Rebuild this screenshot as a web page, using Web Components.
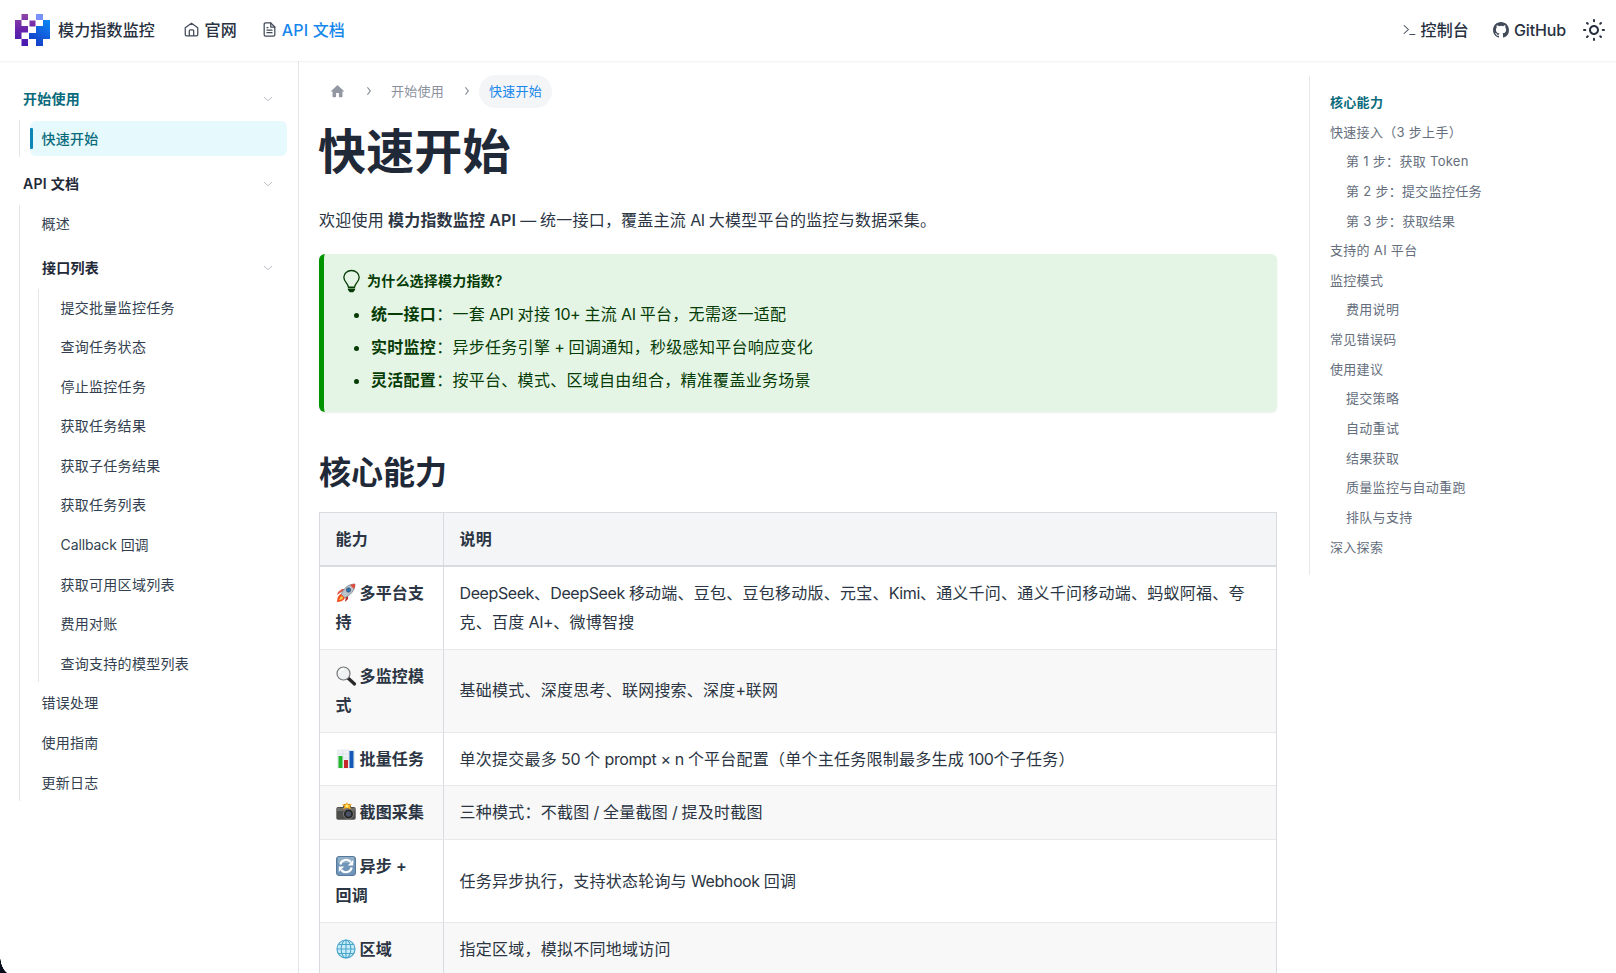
<!DOCTYPE html>
<html lang="zh-CN">
<head>
<meta charset="utf-8">
<title>快速开始 | 模力指数监控</title>
<style>
html{font-size:16px}
body{margin:0;height:973px;overflow:hidden;background:#fff;color:#1f2937;font-family:Inter,"Noto Sans CJK SC",sans-serif;font-size:16px;line-height:1.8;letter-spacing:.16px}
</style>
</head>
<body>
<docs-app></docs-app>
<script>
const define = (name, html, init) => {
  const t = document.createElement('template');
  t.innerHTML = html;
  customElements.define(name, class extends HTMLElement {
    constructor() {
      super();
      this.attachShadow({ mode: 'open' }).append(t.content.cloneNode(true));
    }
    connectedCallback() { if (init) init(this, this.shadowRoot); }
  });
};

// Latin runs inside Chinese prose get tighter tracking than the ideographs.
const tightenLatin = root => {
  const walker = document.createTreeWalker(root, NodeFilter.SHOW_TEXT);
  const nodes = [];
  while (walker.nextNode()) nodes.push(walker.currentNode);
  for (const node of nodes) {
    if (!node.data.trim() || node.parentElement.closest('style,b,[slot=k],[slot=title]')) continue;
    const parts = node.data.split(/([\x20-\x7e—×]+)/).filter(Boolean);
    if (parts.length < 2) continue;
    node.replaceWith(...parts.map(part => {
      if (!/^[\x20-\x7e—×]+$/.test(part)) return part;
      const span = document.createElement('span');
      span.className = 'latin';
      span.style.letterSpacing = '-.4px';
      span.textContent = part;
      return span;
    }));
  }
};

const stroke = 'fill="none" stroke="currentColor" stroke-linecap="round" stroke-linejoin="round"';
const ICONS = {
  home: [24, `<g ${stroke} stroke-width="2"><path d="M2 9.2 12 2l10 7.200V20a2 2 0 0 1-2 2H4a2 2 0 0 1-2-2z"/><path d="M8.500 21.500v-7.500a1.500 1.500 0 0 1 1.500-1.500h4a1.500 1.500 0 0 1 1.500 1.500v7.500"/></g>`],
  doc: [24, `<g ${stroke} stroke-width="2"><path d="M14 1.500H5.500a2 2 0 0 0-2 2v17a2 2 0 0 0 2 2h13a2 2 0 0 0 2-2V8z"/><path d="M14 1.500V8h6.500M8 9h1.500M8 13h8M8 17h8"/></g>`],
  terminal: [24, `<g ${stroke} stroke-width="2"><path d="m2 3 8 8-8 8M12.500 21H22"/></g>`],
  github: [16, `<path fill="currentColor" d="M8 0C3.580 0 0 3.580 0 8c0 3.540 2.290 6.530 5.470 7.590.4.070.55-.17.55-.38 0-.19-.01-.82-.01-1.490-2.010.37-2.530-.49-2.690-.94-.09-.23-.48-.94-.82-1.130-.28-.15-.68-.52-.01-.53.63-.01 1.080.58 1.230.82.72 1.210 1.870.87 2.330.66.070-.52.28-.87.51-1.070-1.780-.2-3.640-.89-3.640-3.950 0-.87.31-1.590.82-2.150-.08-.2-.36-1.020.08-2.120 0 0 .67-.21 2.200.82a7.600 7.600 0 0 1 4 0c1.530-1.040 2.200-.82 2.200-.82.44 1.100.16 1.920.08 2.120.51.56.82 1.270.82 2.150 0 3.070-1.870 3.750-3.650 3.950.29.25.54.73.54 1.480 0 1.070-.01 1.930-.01 2.200 0 .21.15.46.55.38A8.010 8.010 0 0 0 16 8c0-4.420-3.580-8-8-8z"/>`],
  sun: [24, `<path fill="currentColor" d="M12,9c1.650,0,3,1.350,3,3s-1.350,3-3,3s-3-1.350-3-3S10.350,9,12,9 M12,7c-2.760,0-5,2.240-5,5s2.240,5,5,5s5-2.240,5-5 S14.760,7,12,7z"/><path ${stroke} stroke-width="2" d="M2 12h1.300M20.700 12H22M12 2v1.300M12 20.700V22M5 5l.8.8M18.200 18.200l.8.8M19 5l-.8.8M5 19l.8-.8"/>`],
  house: [24, `<path fill="currentColor" d="M10 19v-5h4v5c0 .55.45 1 1 1h3c.55 0 1-.45 1-1v-7h1.700c.46 0 .68-.57.33-.87L12.670 3.600c-.38-.34-.96-.34-1.340 0l-8.360 7.530c-.34.3-.13.87.33.87H5v7c0 .55.45 1 1 1h3c.55 0 1-.45 1-1z"/>`],
  down: [24, `<path ${stroke} stroke-width="1.800" d="m3 8 9 8 9-8"/>`],
  right: [24, `<path ${stroke} stroke-width="3" d="m8 4 8 8-8 8"/>`],
  bulb: [24, `<g ${stroke} stroke-width="1.400"><path d="M8.800 18c0-4-4.800-5.500-4.800-10.500a8 7 0 0 1 16 0C20 12.500 15.200 14 15.200 18z"/></g><path fill="currentColor" d="M8.200 19.200h7.600v1.500l-2 2.500h-3.600l-2-2.500z"/>`],
  rocket: [20, `<path d="M4 10 1 12l1-3 4-3h4z" fill="#e2574c"/><path d="M12 12v4l-3 3 1-5z" fill="#b3261e"/><path d="M5 12C7 6 12 1 19 1c0 7-5 11-10 14z" fill="#b9c3cc" stroke="#66727c" stroke-width=".7"/><path d="M14 2c2-1 4-1 5-1 0 2 0 3-1 5z" fill="#df4a3c"/><circle cx="12.500" cy="7" r="2.200" fill="#2b71b5" stroke="#48545e" stroke-width=".7"/><path d="M5 11c-3 1-4 5-4 8 3 0 6-1 8-4z" fill="#f4511e"/><path d="M6 13c-2 1-2 3-3 4 2 0 3-1 4-2z" fill="#ffd54f"/>`],
  search: [20, `<path d="m12 12 6.500 6" stroke="#282828" stroke-width="3.200" stroke-linecap="round"/><circle cx="7.500" cy="7.500" r="6.500" fill="#eef2f3" stroke="#777" stroke-width="1.200"/><path d="M4 7a4 4 0 0 1 4-4" fill="none" stroke="#fff" stroke-width="1.300"/>`],
  chart: [20, `<path fill="#eef2f5" stroke="#d7dfe4" stroke-width=".5" d="M1.500 1h17v18h-17z"/><path stroke="#cfdae0" stroke-width=".5" d="M2 5h16M2 9h16M2 13h16M7 1v18M13 1v18"/><path fill="#20b52b" d="M2.500 7h4v12h-4z"/><path fill="#c8272c" d="M8 11h4v8H8z"/><path fill="#1559b7" d="M13.500 2h4v17h-4z"/>`],
  camera: [20, `<rect x=".3" y="5" width="19.400" height="12.800" rx="1.800" fill="#4d4d4b"/><path fill="#706e68" d="M1 6h18v3H1z"/><path fill="#383838" d="m7 5 1-3h6l1 3z"/><circle cx="12.500" cy="12" r="5" fill="#252525" stroke="#8b8b88" stroke-width=".8"/><circle cx="12.500" cy="12" r="2.700" fill="#4b5267"/><path fill="#ffae20" d="m11 0 1.500 2.500L16 2l-2 2.500L15 7l-4-1-4 1 1.500-2.500L6 2l3.500.5z"/><circle cx="11" cy="4" r="1.500" fill="#fff07a"/>`],
  cycle: [20, `<rect x=".5" y=".5" width="19" height="19" rx="2.500" fill="#6f95b8" stroke="#56789a"/><path fill="#92afc9" d="M2 1h16v6H2z"/><g fill="none" stroke="#fff" stroke-width="2.200"><path d="M4.300 8.500a6 6 0 0 1 10.500-2.500M15.700 11.500a6 6 0 0 1-10.500 2.500"/></g><path fill="#fff" d="M17.200 4v5.500h-5.500zM2.800 16v-5.500h5.500z"/>`],
  globe: [20, `<circle cx="10" cy="10" r="9" fill="#c9ecfa" stroke="#4ba6cb" stroke-width="1.200"/><g fill="none" stroke="#4ba6cb" stroke-width="1.100"><ellipse cx="10" cy="10" rx="4.800" ry="9"/><path d="M10 1v18M1 10h18M2.500 5.500h15M2.500 14.500h15"/></g>`]
};
define('ui-icon', `<style>:host{display:inline-flex;flex:none;width:16px;height:16px}svg{width:100%;height:100%;display:block;overflow:visible}</style><svg aria-hidden="true" preserveAspectRatio="none"></svg>`, (el, root) => {
  const [box, body] = ICONS[el.getAttribute('name')];
  const svg = root.querySelector('svg');
  svg.setAttribute('viewBox', `0 0 ${box} ${box}`);
  svg.innerHTML = body;
});

define('brand-logo', `<style>:host{display:block;width:35px;height:32px}svg{display:block}</style>
<svg width="35" height="32" viewBox="0 0 35 32"><defs>
<linearGradient id="p" gradientUnits="userSpaceOnUse" x1="8" y1="0" x2="8" y2="32"><stop stop-color="#9146a5"/><stop offset=".5" stop-color="#6623ab"/><stop offset="1" stop-color="#4319b0"/></linearGradient>
<linearGradient id="b" gradientUnits="userSpaceOnUse" x1="34" y1="7" x2="17" y2="30"><stop stop-color="#0c85f4"/><stop offset="1" stop-color="#173ac5"/></linearGradient></defs>
<path fill="url(#p)" d="M6.500 0H13v6H6.500zM0 6h6.500v6H13v6.500H6.500V25H0zM14.500 6.500h6v6h-6zM6.500 25H13v7H6.500z"/>
<path fill="#7991fb" d="M21 0h7v6h-7z"/><path fill="url(#b)" d="M28 6h7v19h-7v7h-7v-7h-7v-6h7v-7h7z"/></svg>`);

define('nav-link', `<style>:host{display:flex;align-items:center;gap:5px;font-weight:500;line-height:24px;white-space:nowrap}:host([active]){color:#1687ec}</style><slot name="icon"></slot><slot></slot>`);

define('top-bar', `<style>:host{display:flex;align-items:center;box-sizing:border-box;height:61px;padding:0 10px 2px 15px;box-shadow:0 1px 2px rgba(0,0,0,.06);background:#fff;position:relative;color:#27313f}
b{font-weight:500;margin:0 29.500px 0 8px;line-height:24px}.l{display:flex;gap:25px}.r{display:flex;align-items:center;margin-left:auto;gap:24px}ui-icon{width:15px;height:15px;color:#414b5a}.t{width:13px;height:12px}.g{width:16px;height:16px}.s{width:24px;height:24px;margin-left:-8px;color:#27313f}.gh{letter-spacing:-.15px}</style>
<brand-logo></brand-logo><b>模力指数监控</b>
<div class="l"><nav-link><ui-icon slot="icon" name="home"></ui-icon>官网</nav-link><nav-link active><ui-icon slot="icon" name="doc"></ui-icon>API 文档</nav-link></div>
<div class="r"><nav-link><ui-icon slot="icon" class="t" name="terminal"></ui-icon>控制台</nav-link><nav-link class="gh"><ui-icon slot="icon" class="g" name="github"></ui-icon>GitHub</nav-link><ui-icon class="s" name="sun"></ui-icon></div>`);

define('side-item', `<style>:host{display:flex;align-items:center;box-sizing:border-box;height:35.200px;padding-left:11.500px;font-size:14px;letter-spacing:.28px;line-height:20px;color:#333f50;border-radius:6px}
:host([active]){background:#e6f9fc;color:#0a6b7c;font-weight:500}i{width:3px;height:21px;border-radius:1px;background:#0b86b5;margin:0 8.500px 0 -11.500px;display:none}:host([active]) i{display:block}</style><i></i><slot></slot>`);

define('side-group', `<style>:host{display:block}.h{display:flex;align-items:center;justify-content:space-between;height:35.200px;padding:0 14px 0 12px;font-size:14px;letter-spacing:.28px;line-height:20px;font-weight:600;color:#1f2937}
:host([current]) .h{color:#0a6b7c}.h ui-icon{width:10px;height:10px;color:#a3a8b0}
.c{display:flex;flex-direction:column;gap:4.400px;margin:3.500px 0 0 8px;padding:1px 0 1px 10px;border-left:1px solid #e4e6e9}</style>
<div class="h"><span></span><ui-icon name="down"></ui-icon></div><div class="c"><slot></slot></div>`, (el, root) => { root.querySelector('span').textContent = el.getAttribute('label'); });

define('docs-sidebar', `<style>:host{display:flex;flex-direction:column;gap:9.200px;box-sizing:border-box;border-right:1px solid #e3e5e8;padding:20.400px 11px 0 11px}side-group side-group{margin:4.600px 0 -1px}</style>
<side-group label="开始使用" current><side-item active>快速开始</side-item></side-group>
<side-group label="API 文档"><side-item>概述</side-item>
<side-group label="接口列表"><side-item>提交批量监控任务</side-item><side-item>查询任务状态</side-item><side-item>停止监控任务</side-item><side-item>获取任务结果</side-item><side-item>获取子任务结果</side-item><side-item>获取任务列表</side-item><side-item style="letter-spacing:-.1px">Callback 回调</side-item><side-item>获取可用区域列表</side-item><side-item>费用对账</side-item><side-item>查询支持的模型列表</side-item></side-group>
<side-item>错误处理</side-item><side-item>使用指南</side-item><side-item>更新日志</side-item></side-group>`);

define('crumb-trail', `<style>:host{display:flex;align-items:center;height:33px;font-size:13px;letter-spacing:.26px;line-height:20px;color:#8b919c}.home{width:17px;height:17px;margin:0 0 0 10px;color:#9297a3}.s{width:8px;height:10px;margin-left:19px;color:#868c97}.m{margin-left:18px}.p{margin-left:8px;padding:6.500px 10px;border-radius:17px;background:#f4f5f6;color:#1687ec}</style>
<ui-icon class="home" name="house"></ui-icon><ui-icon class="s" name="right"></ui-icon><span class="m">开始使用</span><ui-icon class="s" name="right"></ui-icon><span class="p">快速开始</span>`);

define('tip-box', `<style>:host{display:block;box-sizing:border-box;height:158px;border-left:5px solid #009400;border-radius:6px;background:#e5f5e5;padding:15.500px 16px;color:#053c05;box-shadow:0 1px 2px rgba(0,0,0,.08);letter-spacing:.29px}
.t{display:flex;align-items:center;gap:4px;height:24px;font-size:14px;letter-spacing:.2px;font-weight:600;line-height:24px}.t ui-icon{width:23px;height:23px}::slotted(ul){margin:7px 0 0!important;padding-left:31px!important}</style><div class="t"><ui-icon name="bulb"></ui-icon><slot name="title"></slot></div><slot></slot>`);

define('ability-row', `<style>:host{display:grid;grid-template-columns:124px 1fr;background:#fff;border-bottom:1px solid #e7e8ea}:host([alt]){background:#f8f8f8}:host([head]){background:#f3f5f7;border-bottom:2px solid #d8dbe0;font-weight:600}
div{display:flex;align-items:center;box-sizing:border-box;padding:12px 15.500px;color:#2b3543;letter-spacing:.24px}.a{border-right:1px solid #d8dbe0;font-weight:600;white-space:nowrap;letter-spacing:.16px}:host([head]) div{padding-block:11.700px}ui-icon{width:20px;height:20px;vertical-align:-4px;margin-right:4px}</style>
<div class="a"><span><slot name="k"></slot></span></div><div><span><slot></slot></span></div>`, (el, root) => {
  const n = el.getAttribute('icon');
  if (n) { const i = document.createElement('ui-icon'); i.setAttribute('name', n); root.querySelector('.a span').prepend(i); }
});

define('doc-article', `<style>:host{display:block;padding:13.500px 0 0 20px;width:958px}
h1{font-size:48px;line-height:60px;font-weight:700;margin:14.500px 0 0 -1px;letter-spacing:.16px}p{margin:24px 0 0;line-height:28.800px;height:28.800px;color:#2b3543;letter-spacing:.24px}p b{letter-spacing:.16px}b{font-weight:600}tip-box{margin-top:19px}
h2{font-size:32px;line-height:40px;font-weight:600;margin:41px 0 19.500px;letter-spacing:0}ul li{line-height:28.800px;margin-bottom:4.200px}.tb{border:1px solid #d8dbe0;border-bottom:0}</style>
<crumb-trail></crumb-trail><h1>快速开始</h1>
<p>欢迎使用 <b>模力指数监控 API</b> — 统一接口，覆盖主流 AI 大模型平台的监控与数据采集。</p>
<tip-box><span slot="title">为什么选择模力指数?</span><ul><li><b>统一接口</b>：一套 API 对接 10+ 主流 AI 平台，无需逐一适配</li><li><b>实时监控</b>：异步任务引擎 + 回调通知，秒级感知平台响应变化</li><li><b>灵活配置</b>：按平台、模式、区域自由组合，精准覆盖业务场景</li></ul></tip-box>
<h2>核心能力</h2>
<div class="tb"><ability-row head><span slot="k">能力</span>说明</ability-row>
<ability-row icon="rocket"><span slot="k">多平台支<br>持</span>DeepSeek、DeepSeek 移动端、豆包、豆包移动版、元宝、Kimi、通义千问、通义千问移动端、蚂蚁阿福、夸<br>克、百度 AI+、微博智搜</ability-row>
<ability-row icon="search" alt><span slot="k">多监控模<br>式</span>基础模式、深度思考、联网搜索、深度+联网</ability-row>
<ability-row icon="chart"><span slot="k">批量任务</span>单次提交最多 50 个 prompt × n 个平台配置（单个主任务限制最多生成 100个子任务）</ability-row>
<ability-row icon="camera" alt><span slot="k">截图采集</span>三种模式：不截图 / 全量截图 / 提及时截图</ability-row>
<ability-row icon="cycle"><span slot="k">异步 +<br>回调</span>任务异步执行，支持状态轮询与 Webhook 回调</ability-row>
<ability-row icon="globe" alt><span slot="k">区域</span>指定区域，模拟不同地域访问</ability-row></div>`, (el, root) => tightenLatin(root));

define('toc-link', `<style>:host{display:block;height:29.650px;line-height:29.650px;font-size:13px;letter-spacing:.3px;color:#656e7c;white-space:nowrap}:host([sub]){padding-left:16px}:host([active]){color:#0a6b7c;font-weight:600}</style><slot></slot>`);
define('page-toc', `<style>:host{display:block;box-sizing:border-box;height:499px;margin:15px 0 0 32px;padding:12px 0 0 20px;border-left:1px solid #e6e8ea}</style>
<toc-link active>核心能力</toc-link><toc-link>快速接入（3 步上手）</toc-link><toc-link sub>第 1 步：获取 Token</toc-link><toc-link sub>第 2 步：提交监控任务</toc-link><toc-link sub>第 3 步：获取结果</toc-link><toc-link>支持的 AI 平台</toc-link><toc-link>监控模式</toc-link><toc-link sub>费用说明</toc-link><toc-link>常见错误码</toc-link><toc-link>使用建议</toc-link><toc-link sub>提交策略</toc-link><toc-link sub>自动重试</toc-link><toc-link sub>结果获取</toc-link><toc-link sub>质量监控与自动重跑</toc-link><toc-link sub>排队与支持</toc-link><toc-link>深入探索</toc-link>`);

define('docs-app', `<style>:host{display:flex;flex-direction:column;height:973px;overflow:hidden;position:relative}main{display:grid;grid-template-columns:299px 978px 1fr;flex:1;min-height:0}.corner{position:absolute;left:0;bottom:0;width:9px;height:14px;background:radial-gradient(ellipse 12px 19px at 12px -3px,transparent 96%,#080e1c 100%)}doc-article{min-height:0}</style>
<top-bar></top-bar><main><docs-sidebar></docs-sidebar><doc-article></doc-article><page-toc></page-toc></main><div class="corner"></div>`);
</script>
</body>
</html>
